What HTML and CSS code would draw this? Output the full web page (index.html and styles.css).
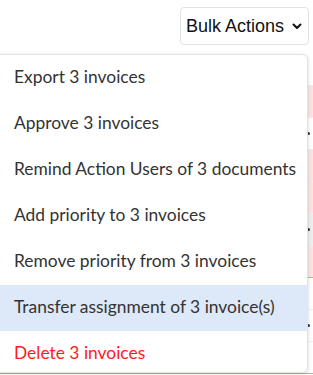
FILE: index.html
```html
<!DOCTYPE html>
<html>
<head>
<meta charset="utf-8">
<link rel="stylesheet" href="styles.css">
</head>
<body>
<div class="page">
  <div class="toolbar">
    <button class="bulk">Bulk Actions
      <svg class="chev" width="10" height="7" viewBox="0 0 10 7"><path d="M1.5 1.5 L5 5 L8.5 1.5" fill="none" stroke="#111" stroke-width="2" stroke-linecap="round" stroke-linejoin="round"/></svg>
    </button>
  </div>
  <div class="table">
    <div class="row r-plain"></div>
    <div class="row r-pink"></div>
    <div class="row r-plain"><span class="dot"></span></div>
    <div class="row r-pink"></div>
    <div class="row r-pink"></div>
    <div class="row r-gray"><span class="dot"></span></div>
    <div class="row r-pink r-line"></div>
    <div class="row r-plain"></div>
    <div class="row r-plain"><span class="dot"></span></div>
    <div class="row r-plain r-line"></div>
  </div>
  <ul class="menu">
    <li class="item">Export 3 invoices</li>
    <li class="item">Approve 3 invoices</li>
    <li class="item">Remind Action Users of 3 documents</li>
    <li class="item">Add priority to 3 invoices</li>
    <li class="item">Remove priority from 3 invoices</li>
    <li class="item active">Transfer assignment of 3 invoice(s)</li>
    <li class="item danger">Delete 3 invoices</li>
  </ul>
</div>
</body>
</html>
```
FILE: styles.css
```css
* { box-sizing: border-box; }
html, body { margin: 0; padding: 0; background: #fff; }
body { width: 313px; height: 375px; overflow: hidden; }
.page { position: relative; width: 313px; height: 375px; }
.toolbar { display: flex; justify-content: flex-end; padding: 7px 4px 0 0; height: 54px; }
.bulk {
  display: flex; align-items: center; gap: 8px;
  height: 38px; padding: 0 6px 0 5px;
  background: #fff; border: 1px solid #dfe3e8; border-radius: 4px;
  font-family: "Liberation Sans", Arial, sans-serif; font-size: 18px; color: #111;
}
.chev { margin-top: 1px; }
.table { display: flex; flex-direction: column; }
.row { position: relative; height: 32px; border-bottom: 1px solid #f0f0f0; }
.r-pink { background: #fbe4e4; }
.r-gray { background: #eeeeee; }
.r-line { border-bottom: 1px solid #e89a9a; }
.dot { position: absolute; right: 3px; top: 14px; width: 3px; height: 3px; border-radius: 50%; background: #333; }
.menu {
  position: absolute; left: -6px; top: 54px; width: 314px; height: 319px;
  margin: 0; padding: 0; list-style: none;
  background: #fff; border: 1px solid #e3e3e3; border-radius: 6px;
  box-shadow: 0 1px 4px rgba(0,0,0,0.15);
  overflow: hidden;
}
.item {
  height: 46px; display: flex; align-items: center; padding: 0 0 3px 19px;
  font-family: Lato, "Open Sans", sans-serif; font-size: 17.4px; color: #333;
  white-space: nowrap;
}
.item.active { background: #dde8f8; }
.item.danger { color: #ff1a1a; }
```
